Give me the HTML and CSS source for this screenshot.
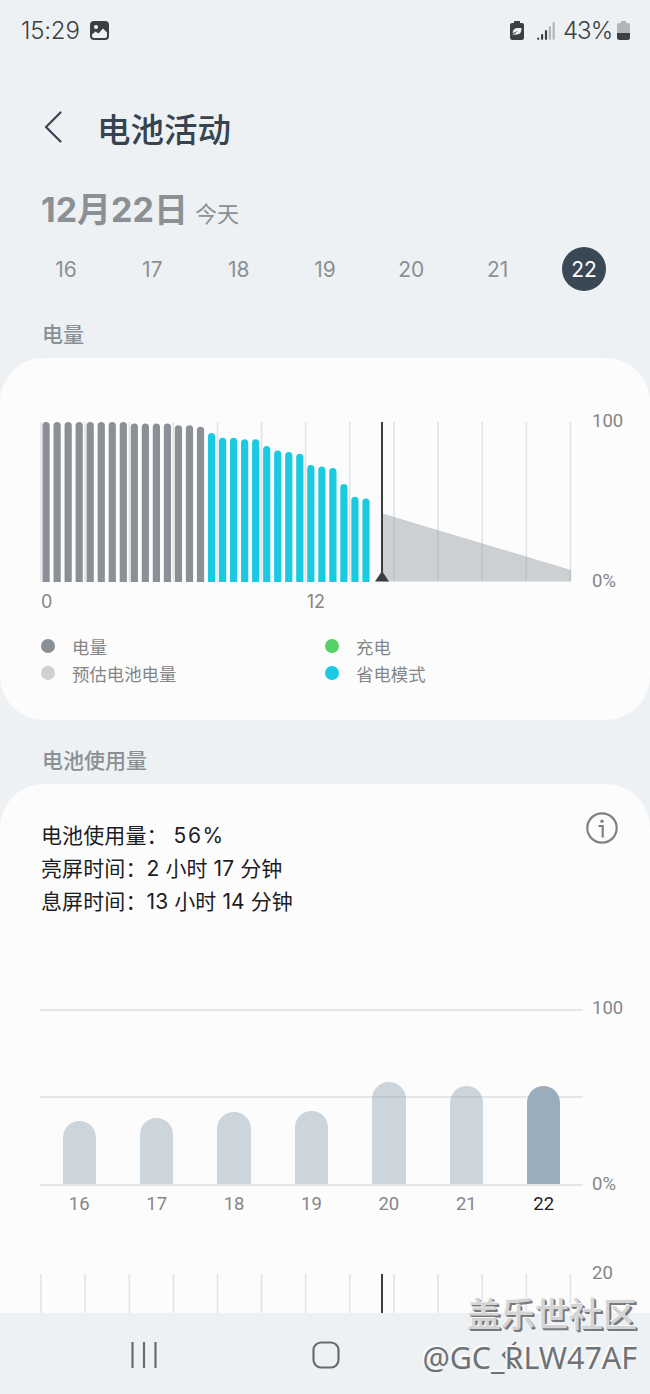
FILE: index.html
```html
<!DOCTYPE html>
<html lang="zh-CN">
<head>
    <meta charset="UTF-8" />
    <meta name="viewport" content="width=device-width, initial-scale=1.0" />
    <title>电池活动</title>
    <link rel="stylesheet" href="styles.css">
</head>
<body>
    <div class="screen">
        <div class="status-bar">
            <span class="time">15:29</span>
            <svg class="photo-icon" width="19" height="19" viewBox="0 0 19 19">
                <rect x="0" y="0" width="19" height="19" rx="4" fill="#3c4043" />
                <circle cx="6" cy="6" r="2.1" fill="#edf1f4" />
                <path d="M2 13.500 5.500 10.500 8.500 12.500 13 7.500 17 11.500V15Q17 17 15 17H4Q2 17 2 15Z" fill="#edf1f4" />
            </svg>
            <div class="status-right">
                <svg width="14" height="19" viewBox="0 0 14 19">
                    <path d="M4 0H10V2H12Q14 2 14 4V16.500Q14 19 11.500 19H2.500Q0 19 0 16.500V4Q0 2 2 2H4Z" fill="#3c4043" />
                    <path d="M11.500 7Q11.500 14 6.500 13.500Q4 13.500 2 14.200Q4 13 8 10Q4 11.200 2.700 12.500Q2.500 7 8 7Z" fill="#edf1f4" />
                </svg>
                <svg class="signal" width="18" height="18" viewBox="0 0 18 18" fill="none" stroke-width="2.2" stroke-linecap="round">
                    <path d="M1.200 16.700V16.800M5.100 13V16.800M9 9V16.800" stroke="#3c4043" />
                    <path d="M12.900 5V16.800M16.700 1.200V16.800" stroke="#b2b5b6" />
                </svg>
                <span class="percent">43%</span>
                <svg width="13" height="19" viewBox="0 0 13 19">
                    <path d="M4 0H9V2H11Q13 2 13 4V12H0V4Q0 2 2 2H4Z" fill="#b2b5b6" />
                    <path d="M0 12H13V16.500Q13 19 10.500 19H2.500Q0 19 0 16.500Z" fill="#3c4043" />
                </svg>
            </div>
        </div>

        <header class="title-bar">
            <svg width="18" height="32" viewBox="0 0 18 32" fill="none" stroke="#364350" stroke-width="2.2" stroke-linecap="round" stroke-linejoin="round">
                <path d="M16.500 1.500 2 16 16.500 30.500" />
            </svg>
            <h1>电池活动</h1>
        </header>

        <div class="date">
            <span class="date-main">12月22日</span>
            <span class="date-sub">今天</span>
        </div>

        <div class="days">
            <span>16</span>
            <span>17</span>
            <span>18</span>
            <span>19</span>
            <span>20</span>
            <span>21</span>
            <span class="selected">22</span>
        </div>

        <h2 class="level-title">电量</h2>

        <section class="card level-card">
            <div class="chart">
                <svg width="532" height="160" viewBox="0 0 532 160" fill="none">
                    <path d="M1 0V159.500M45.200 0V159.500M89.300 0V159.500M133.400 0V159.500M177.500 0V159.500M221.600 0V159.500M265.700 0V159.500M309.800 0V159.500M354 0V159.500M398 0V159.500M442.200 0V159.500M486.300 0V159.500M530.500 0V159.500" stroke="#e2e3e4" stroke-width="1.600" />
                    <path d="M342.500 91.500 531 148V159.500H342.500Z" fill="#8b9398" fill-opacity=".42" />
                    <g stroke-width="7.200" stroke-linecap="round">
                        <path d="M6.100 3.600V170M17.130 3.600V170M28.160 3.600V170M39.190 3.600V170M50.220 3.600V170M61.250 3.600V170M72.280 3.600V170M83.310 3.600V170M94.340 5.200V170M105.370 5.200V170M116.400 5.200V170M127.430 5.200V170M138.460 6.800V170M149.490 6.800V170M160.520 8.400V170" stroke="#8b9097" />
                        <path d="M171.550 14.600V170M182.580 19.300V170M193.610 19.300V170M204.640 20.900V170M215.670 20.900V170M226.700 27.500V170M237.730 32.100V170M248.760 33.700V170M259.790 35.300V170M270.820 46.600V170M281.850 48.100V170M292.880 49.700V170M303.910 65.700V170M314.940 78.400V170M325.970 80V170" stroke="#1bcae1" />
                    </g>
                    <path d="M342 0V155" stroke="#3c3d40" stroke-width="2" />
                    <path d="M342 149 349 159.500H335Z" fill="#3c3d40" />
                </svg>
                <div class="scale">
                    <span>100</span>
                    <span>0%</span>
                </div>
            </div>
            <div class="hours">
                <span>0</span>
                <span>12</span>
            </div>
            <ul class="legend">
                <li><i class="dot level"></i>电量</li>
                <li><i class="dot charging"></i>充电</li>
                <li><i class="dot forecast"></i>预估电池电量</li>
                <li><i class="dot saving"></i>省电模式</li>
            </ul>
        </section>

        <h2 class="usage-title">电池使用量</h2>

        <section class="card usage-card">
            <div class="summary">
                <div class="summary-text">
                    <p>电池使用量： <b>56%</b></p>
                    <p>亮屏时间：2 小时 17 分钟</p>
                    <p>息屏时间：13 小时 14 分钟</p>
                </div>
                <svg width="32" height="32" viewBox="0 0 32 32" fill="none" stroke="#808182" stroke-width="2.200">
                    <circle cx="16" cy="16" r="14.700" />
                    <path d="M12.500 14H16.700V25.500" />
                    <circle cx="16" cy="9.200" r="1.700" fill="#808182" stroke="none" />
                </svg>
            </div>

            <div class="chart">
                <div class="week">
                    <div class="bar" style="height: 63px"></div>
                    <div class="bar" style="height: 66px"></div>
                    <div class="bar" style="height: 72px"></div>
                    <div class="bar" style="height: 73px"></div>
                    <div class="bar" style="height: 102px"></div>
                    <div class="bar" style="height: 98px"></div>
                    <div class="bar today" style="height: 98px"></div>
                </div>
                <div class="scale week-scale">
                    <span>100</span>
                    <span>0%</span>
                </div>
            </div>
            <div class="week-days">
                <span>16</span>
                <span>17</span>
                <span>18</span>
                <span>19</span>
                <span>20</span>
                <span>21</span>
                <span class="today">22</span>
            </div>

            <div class="chart hourly">
                <svg width="532" height="39" viewBox="0 0 532 39" fill="none">
                    <path d="M1 0V39M45.200 0V39M89.300 0V39M133.400 0V39M177.500 0V39M221.600 0V39M265.700 0V39M309.800 0V39M354 0V39M398 0V39M442.200 0V39M486.300 0V39M530.500 0V39" stroke="#e2e3e4" stroke-width="1.600" />
                    <path d="M342 0V39" stroke="#3c3d40" stroke-width="2" />
                </svg>
                <div class="scale">
                    <span>20</span>
                </div>
            </div>
        </section>

        <nav class="nav-bar">
            <svg width="26" height="26" viewBox="0 0 26 26" stroke="#696c6f" stroke-width="2.200">
                <path d="M1.500 0V26M13 0V26M24.500 0V26" />
            </svg>
            <svg width="28" height="28" viewBox="0 0 28 28" fill="none" stroke="#696c6f" stroke-width="2.200">
                <rect x="1.500" y="1.500" width="25" height="25" rx="7.500" />
            </svg>
            <svg width="16" height="28" viewBox="0 0 16 28" fill="none" stroke="#696c6f" stroke-width="2.200">
                <path d="M15 1 2 14 15 27" />
            </svg>
        </nav>

        <div class="watermark">
            <div class="community">盖乐世社区</div>
            <div class="author">@GC_RLW47AF</div>
        </div>
    </div>
</body>
</html>
```
FILE: styles.css
```css
* {
    box-sizing: border-box;
}

body {
    margin: 0;
    background-color: #edf1f4;
    font-family: Inter, 'Noto Sans CJK SC', sans-serif;
    color: #8b9095;
}

h1, h2, p, ul {
    margin: 0;
    padding: 0;
}

svg {
    display: block;
    flex: none;
}

.screen {
    position: relative;
    width: 650px;
    height: 1394px;
    overflow: hidden;
}

/* status bar */
.status-bar {
    display: flex;
    align-items: center;
    height: 60px;
    padding: 0 20px 0 21px;
    color: #3c4043;
    font-size: 24px;
    font-weight: 350;
}

.time {
    width: 69px;
    letter-spacing: -0.2px;
}

.status-right {
    display: flex;
    align-items: center;
    margin-left: auto;
}

.signal {
    margin: 2px 8px 0 13px;
}

.percent {
    width: 54px;
    letter-spacing: -1px;
}

/* heading and date */
.title-bar {
    display: flex;
    align-items: center;
    height: 134px;
    padding: 0 44px;
    gap: 35px;
}

.title-bar h1 {
    padding-top: 6px;
    color: #364350;
    font-size: 33.5px;
    font-weight: 500;
    line-height: 48px;
}

.date {
    display: flex;
    align-items: baseline;
    gap: 7px;
    height: 52px;
    margin-top: -10px;
    padding-left: 41px;
    line-height: 52px;
    white-space: nowrap;
}

.date-main {
    font-size: 34px;
    font-weight: 700;
}

.date-sub {
    font-size: 22px;
}

.days {
    display: flex;
    justify-content: space-between;
    margin-top: 11px;
    padding: 0 44px;
    font-size: 21px;
    line-height: 46px;
    text-align: center;
}

.days span {
    width: 44px;
    height: 44px;
}

.days .selected {
    border-radius: 50%;
    background-color: #3a4856;
    color: #fff;
}

h2 {
    padding-left: 42px;
    font-size: 21px;
    font-weight: 500;
    line-height: 30px;
}

.level-title {
    margin-top: 29px;
}

.usage-title {
    margin-top: 26px;
}

/* cards */
.card {
    background-color: #fcfcfd;
    font-family: Roboto, 'Noto Sans CJK SC', sans-serif;
}

.level-card {
    height: 362px;
    margin-top: 8px;
    padding: 64px 0 0 40px;
    border-radius: 44px;
}

.usage-card {
    height: 529px;
    margin-top: 8px;
    padding-left: 40px;
    border-radius: 44px 44px 0 0;
}

.chart {
    display: flex;
}

.scale {
    display: flex;
    flex-direction: column;
    justify-content: space-between;
    margin: -12px 0 -10px 20px;
    color: #858687;
    font-size: 18.500px;
    line-height: 22px;
}

.hours {
    display: flex;
    justify-content: space-between;
    width: 285px;
    margin-top: 8px;
    padding-left: 1px;
    color: #858687;
    font-family: Inter, sans-serif;
    font-size: 18px;
    line-height: 24px;
}

.legend {
    display: grid;
    grid-template-columns: 284px 1fr;
    margin-top: 21px;
    list-style: none;
    color: #858687;
    font-size: 17.400px;
    line-height: 27px;
}

.legend li {
    display: flex;
    align-items: center;
}

.dot {
    width: 14px;
    height: 14px;
    margin: -5px 17px 0 1px;
    border-radius: 50%;
}

.level { background-color: #8b9097; }
.charging { background-color: #55cf66; }
.forecast { background-color: #cfd0d1; }
.saving { background-color: #1bcae1; }

/* usage summary */
.summary {
    display: flex;
    justify-content: space-between;
    height: 225px;
    padding: 28px 32px 0 1px;
    color: #1c1d1f;
    font-family: Inter, 'Noto Sans CJK SC', sans-serif;
    font-size: 21px;
    line-height: 33px;
    letter-spacing: 0.1px;
}

.summary b {
    font-weight: 400;
    letter-spacing: 1.5px;
}

.summary-text {
    padding-top: 7px;
}

/* weekly bars */
.week {
    display: flex;
    align-items: flex-end;
    justify-content: space-between;
    width: 543px;
    height: 177px;
    padding: 0 22.500px;
    border-top: 2px solid #e5e6e7;
    border-bottom: 2px solid #e5e6e7;
    background: linear-gradient(#e5e6e7, #e5e6e7) 0 85px / 100% 2px no-repeat;
}

.bar {
    width: 33.500px;
    border-radius: 17px 17px 0 0;
    background-color: rgba(155, 172, 187, 0.5);
}

.bar.today {
    background-color: #9bacbb;
}

.week-scale {
    margin: -12px 0 -9px 9px;
}

.week-days {
    display: flex;
    justify-content: space-between;
    width: 543px;
    margin-top: 6px;
    padding: 0 22.500px;
    color: #858687;
    font-size: 18.500px;
    line-height: 24px;
    text-align: center;
}

.week-days span {
    width: 33.500px;
}

.week-days .today {
    color: #1c1d1f;
}

.hourly {
    margin-top: 58px;
}

/* system navigation */
.nav-bar {
    display: flex;
    align-items: center;
    height: 81px;
    padding: 3px 0 0 131px;
    gap: 155px;
    background-color: #edf1f4;
}

.nav-bar svg:last-child {
    margin-left: 6px;
}

.watermark {
    position: absolute;
    right: 13px;
    bottom: 16px;
    color: #d3d4d5;
    text-align: right;
    white-space: nowrap;
    text-shadow: -1px -1px 0 #f7f7f7, 1px 1px 0 #77797b, 2px 2px 0 #77797b;
}

.community {
    font-family: 'Noto Sans CJK SC', sans-serif;
    font-size: 34px;
    font-weight: 500;
    line-height: 50px;
}

.author {
    color: #6f7275;
    font-family: 'Noto Sans', sans-serif;
    font-size: 30.400px;
    font-weight: 400;
    line-height: 40px;
    text-shadow: -1px -1px 0 #fafafa, -2px -2px 0 #fafafa;
}
```
